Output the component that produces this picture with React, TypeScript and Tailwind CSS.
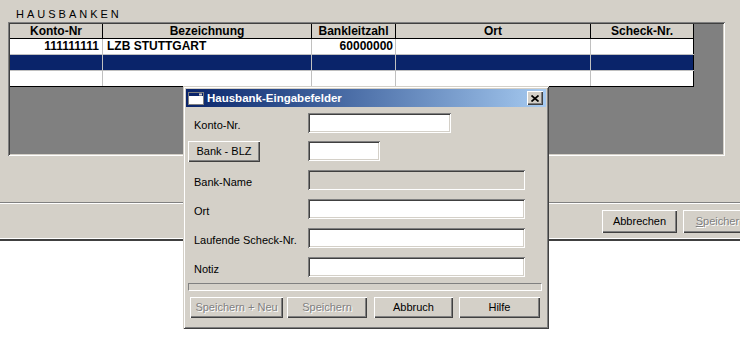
import React from "react";

const FONT = "font-['Liberation_Sans',Arial,sans-serif]";

const raised =
  "shadow-[inset_1px_1px_0_#fff,inset_-1px_-1px_0_#404040,inset_-2px_-2px_0_#808080]";
const sunken =
  "shadow-[inset_1px_1px_0_#808080,inset_-1px_-1px_0_#fff,inset_2px_2px_0_#404040,inset_-2px_-2px_0_#d4d0c8]";
const frame =
  "shadow-[inset_1px_1px_0_#d4d0c8,inset_-1px_-1px_0_#404040,inset_2px_2px_0_#fff,inset_-2px_-2px_0_#808080]";

type Col = { title: string; w: string; align: string };

const COLS: Col[] = [
  { title: "Konto-Nr", w: "w-[93px]", align: "justify-end pr-[3px]" },
  { title: "Bezeichnung", w: "w-[209px]", align: "justify-start pl-[4px]" },
  { title: "Bankleitzahl", w: "w-[84px]", align: "justify-end pr-[2px]" },
  { title: "Ort", w: "w-[195px]", align: "justify-start pl-[4px]" },
  { title: "Scheck-Nr.", w: "w-[103px]", align: "justify-start pl-[4px]" },
];

const ROWS = [
  { cells: ["111111111", "LZB STUTTGART", "60000000", "", ""], selected: false },
  { cells: ["", "", "", "", ""], selected: true },
  { cells: ["", "", "", "", ""], selected: false },
];

function WinButton({
  label,
  w,
  h = "h-[21px]",
  disabled = false,
  className = "",
  children,
}: {
  label?: string;
  w: string;
  h?: string;
  disabled?: boolean;
  className?: string;
  children?: React.ReactNode;
}) {
  return (
    <div
      className={`${w} ${h} ${raised} bg-[#d4d0c8] flex items-center justify-center shrink-0 text-[11px] ${
        disabled ? "text-[#808080] [text-shadow:1px_1px_0_#fff]" : "text-black"
      } ${className}`}
    >
      {children ?? label}
    </div>
  );
}

function Field({ w, disabled = false }: { w: string; disabled?: boolean }) {
  return <div className={`${w} h-[20px] ${sunken} ${disabled ? "bg-[#d4d0c8]" : "bg-white"}`} />;
}

function Label({ text }: { text: string }) {
  return <span className="pl-[8px] mt-[4px]">{text}</span>;
}

function Row({
  label,
  field,
  className = "",
}: {
  label: React.ReactNode;
  field: React.ReactNode;
  className?: string;
}) {
  return (
    <div className={`flex items-start ${className}`}>
      <div className="w-[122px] h-[20px] flex items-center shrink-0">{label}</div>
      {field}
    </div>
  );
}

export default function App() {
  return (
    <div className={`w-[740px] h-[351px] bg-white relative overflow-hidden ${FONT}`}>
      {/* main window */}
      <div className="h-[241px] bg-[#d4d0c8] flex flex-col">
        <div className="pl-[16px] pt-[8px] text-[11px] leading-[13px] tracking-[3px] text-black">
          HAUSBANKEN
        </div>

        {/* grid */}
        <div className={`ml-[8px] mt-[1px] w-[717px] h-[134px] p-[2px] ${sunken}`}>
          <div className="w-full h-full bg-[#808080]">
            <div className="w-[684px] text-[12px] font-bold text-black">
              <div className="flex h-[15px]">
                {COLS.map((c) => (
                  <div
                    key={c.title}
                    className={`${c.w} h-full bg-[#d4d0c8] border-r border-b border-black flex items-center justify-center leading-[14px]`}
                  >
                    {c.title}
                  </div>
                ))}
              </div>
              {ROWS.map((r, i) => (
                <div
                  key={i}
                  className={`flex h-[16px] border-b ${
                    i === ROWS.length - 1 ? "border-black" : "border-[#c0c0c0]"
                  } ${r.selected ? "bg-[#0a246a]" : "bg-white"}`}
                >
                  {r.cells.map((v, j) => (
                    <div
                      key={j}
                      className={`${COLS[j].w} h-full border-r ${
                        j === COLS.length - 1 ? "border-black" : "border-[#c0c0c0]"
                      } flex items-center leading-[15px] ${COLS[j].align}`}
                    >
                      {v}
                    </div>
                  ))}
                </div>
              ))}
            </div>
          </div>
        </div>

        {/* groove + button bar */}
        <div className="mt-[46px] border-t border-[#808080] border-b border-b-white" />
        <div className="h-[34px] flex justify-end items-start pt-[6px] gap-[6px] mr-[-18px]">
          <WinButton label="Abbrechen" w="w-[75px]" h="h-[23px]" />
          <WinButton w="w-[75px]" h="h-[23px]" disabled>
            <span>
              <span className="underline">S</span>peichern
            </span>
          </WinButton>
        </div>
        <div className="border-t border-white" />
        <div className="border-t-2 border-[#404040]" />
      </div>

      {/* dialog */}
      <div
        className={`absolute left-[183px] top-[86px] w-[366px] h-[243px] bg-[#d4d0c8] p-[3px] ${frame} flex flex-col text-[11px] text-black`}
      >
        <div className="h-[18px] bg-linear-to-r from-[#0a246a] to-[#a6caf0] flex items-center">
          <svg width="16" height="13" viewBox="0 0 16 13" className="ml-[2px] shrink-0">
            <rect x="0.5" y="0.5" width="15" height="12" fill="#fff" stroke="#808080" />
            <rect x="1" y="1" width="14" height="3" fill="#0a246a" />
            <rect x="11" y="1.5" width="3" height="2" fill="#d4d0c8" />
          </svg>
          <span className="ml-[3px] text-white font-bold text-[11.5px] leading-[18px]">
            Hausbank-Eingabefelder
          </span>
          <div className={`ml-auto mr-[3px] w-[16px] h-[14px] bg-[#d4d0c8] ${raised} flex items-center justify-center`}>
            <svg width="8" height="7" viewBox="0 0 8 7">
              <path d="M0.5 0.5 L7.5 6.5 M7.5 0.5 L0.5 6.5" stroke="#000" strokeWidth="1.7" />
            </svg>
          </div>
        </div>

        <Row className="mt-[6px]" label={<Label text="Konto-Nr." />} field={<Field w="w-[143px]" />} />
        <Row
          className="mt-[8px]"
          label={<WinButton label="Bank - BLZ" w="w-[72px]" className="ml-[2px]" />}
          field={<Field w="w-[72px]" />}
        />
        <Row className="mt-[9px]" label={<Label text="Bank-Name" />} field={<Field w="w-[217px]" disabled />} />
        <Row className="mt-[9px]" label={<Label text="Ort" />} field={<Field w="w-[217px]" />} />
        <Row className="mt-[9px]" label={<Label text="Laufende Scheck-Nr." />} field={<Field w="w-[217px]" />} />
        <Row className="mt-[9px]" label={<Label text="Notiz" />} field={<Field w="w-[217px]" />} />

        <div className="mt-[6px] ml-[2px] w-[354px] h-[8px] border border-t-[#808080] border-l-[#808080] border-b-white border-r-white" />

        <div className="mt-[6px] flex">
          <WinButton label="Speichern + Neu" w="w-[93px]" className="ml-[4px]" disabled />
          <WinButton label="Speichern" w="w-[80px]" className="ml-[4px]" disabled />
          <WinButton label="Abbruch" w="w-[79px]" className="ml-[7px]" />
          <WinButton label="Hilfe" w="w-[81px]" className="ml-[6px]" />
        </div>
      </div>
    </div>
  );
}
